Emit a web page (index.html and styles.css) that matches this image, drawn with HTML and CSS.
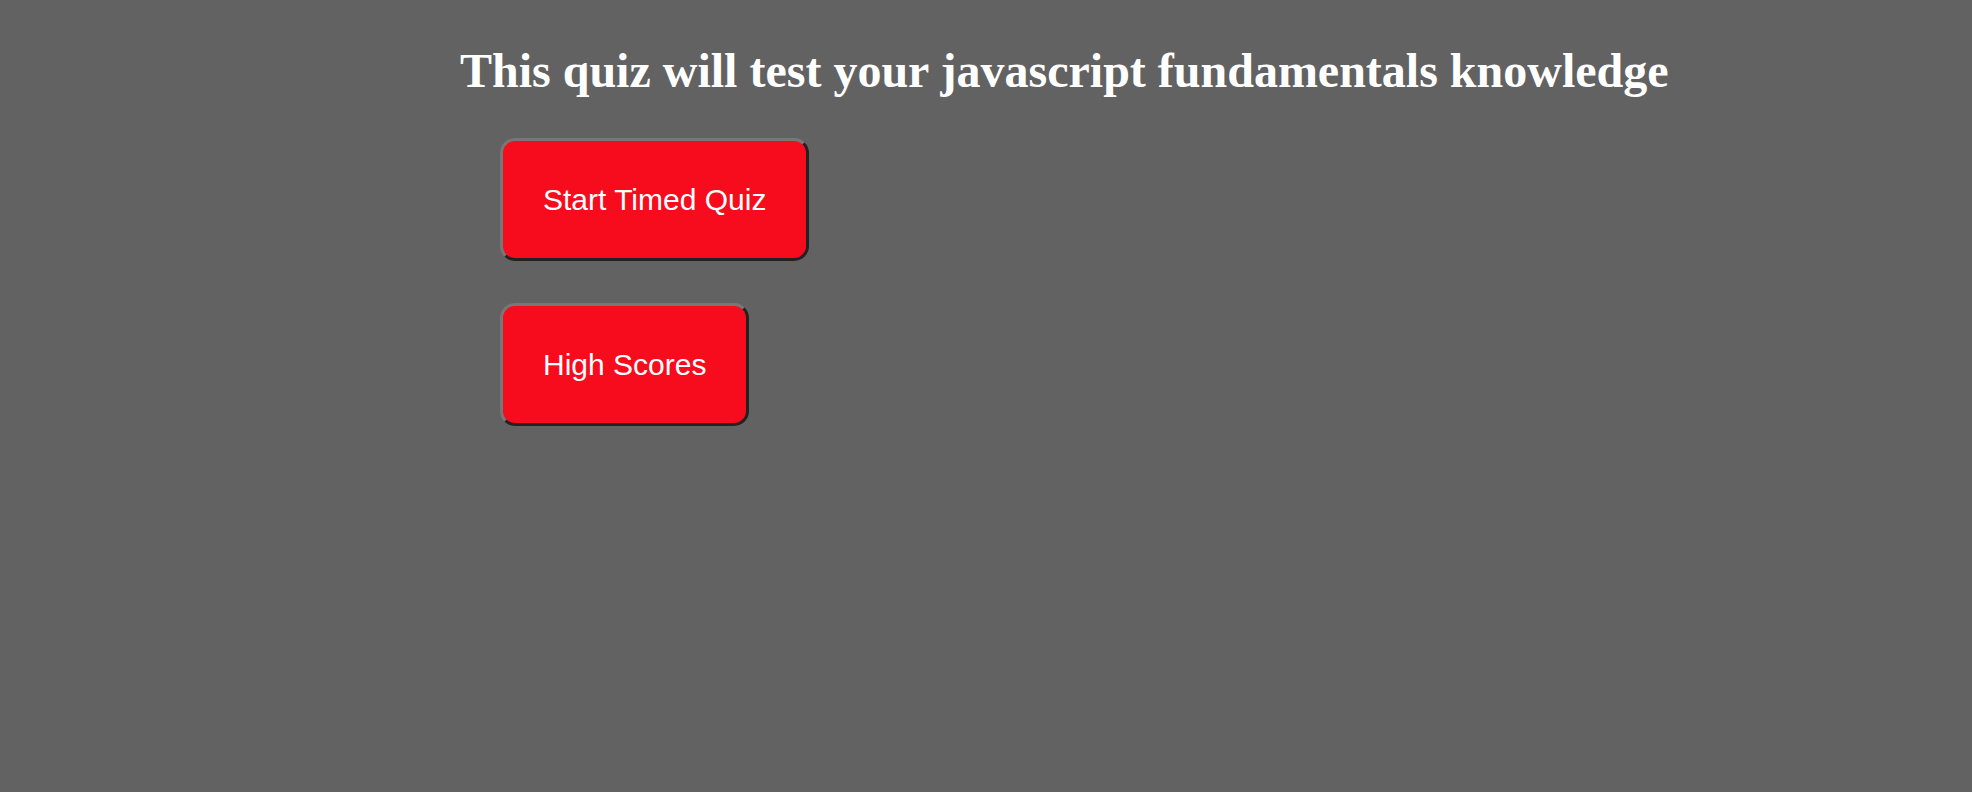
FILE: index.html
```html
<!DOCTYPE html>
<html lang="en">
<head>
<meta charset="utf-8">
<title>Quiz</title>
<link rel="stylesheet" href="styles.css">
</head>
<body>
<main class="page">
  <h1 class="title">This quiz will test your javascript fundamentals knowledge</h1>
  <div class="actions">
    <button class="btn" type="button">Start Timed Quiz</button>
    <button class="btn" type="button">High Scores</button>
  </div>
</main>
</body>
</html>
```
FILE: styles.css
```css
html, body {
  margin: 0;
  padding: 0;
  background: #626262;
  min-height: 100%;
}
body {
  font-family: "Liberation Serif", "Times New Roman", serif;
  color: #ffffff;
}
.page {
  padding: 43px 0 0 460px;
}
.title {
  margin: 0;
  font-family: "Liberation Serif", "Times New Roman", serif;
  font-weight: bold;
  font-size: 48px;
  line-height: normal;
  color: #ffffff;
}
.actions {
  display: flex;
  flex-direction: column;
  align-items: flex-start;
  gap: 42px;
  margin-top: 40px;
  margin-left: 40px;
}
.btn {
  font-family: "Liberation Sans", Arial, Helvetica, sans-serif;
  font-size: 30px;
  line-height: 35px;
  color: #ffffff;
  background: #f60c1c;
  padding: 41px 40px;
  border-style: solid;
  border-width: 3px;
  border-color: #777777 #222222 #222222 #777777;
  border-radius: 15px;
  cursor: pointer;
}
```
